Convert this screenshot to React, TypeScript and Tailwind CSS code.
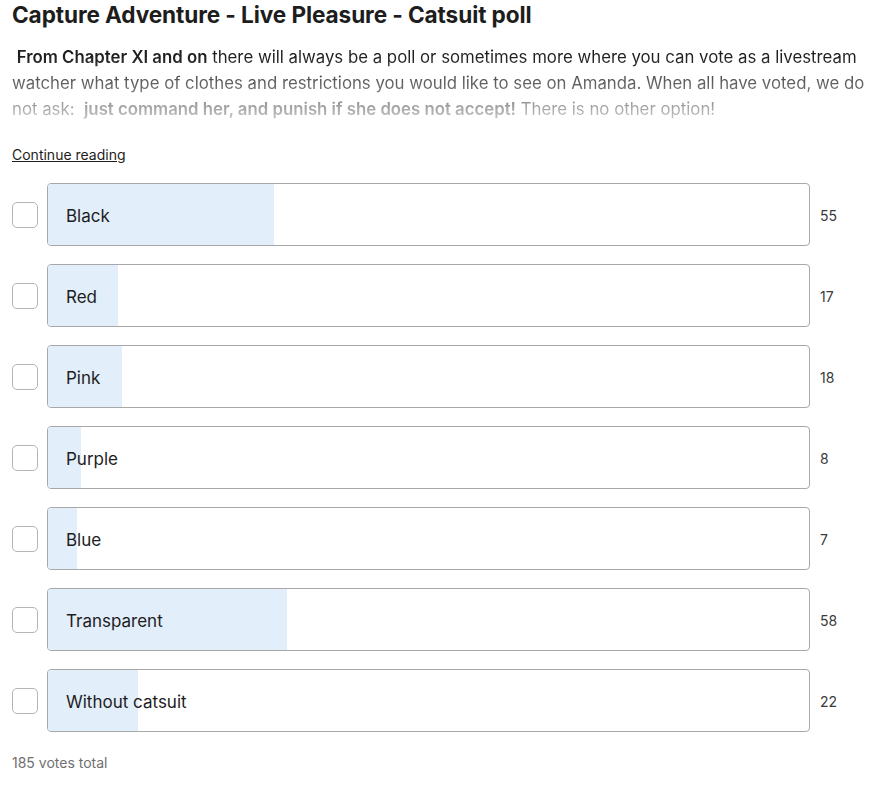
import { useState } from "react";

type Option = { label: string; votes: number };

const options: Option[] = [
  { label: "Black", votes: 55 },
  { label: "Red", votes: 17 },
  { label: "Pink", votes: 18 },
  { label: "Purple", votes: 8 },
  { label: "Blue", votes: 7 },
  { label: "Transparent", votes: 58 },
  { label: "Without catsuit", votes: 22 },
];

const total = 185;

export default function App() {
  const [checked, setChecked] = useState<string[]>([]);

  const toggle = (label: string) =>
    setChecked((prev) =>
      prev.includes(label) ? prev.filter((l) => l !== label) : [...prev, label]
    );

  return (
    <main className="min-h-screen bg-white px-3 pt-[1px] font-['Inter',sans-serif] text-[#1d1d1d]">
      <h1 className="text-[22.6px] font-bold leading-[28px] tracking-[-0.1px]">
        Capture Adventure - Live Pleasure - Catsuit poll
      </h1>

      <p className="mt-[15px] bg-gradient-to-b from-[#1d1d1d] from-[15%] to-[#d0d0d0] to-[100%] bg-clip-text text-[16.8px] leading-[26px] text-transparent">
        &nbsp;<b className="font-semibold">From Chapter XI and on</b> there will always be a poll or
        sometimes more where you can vote as a livestream watcher what type of clothes and
        restrictions you would like to see on Amanda. When all have voted, we do not ask:&nbsp;{" "}
        <b className="font-semibold">just command her, and punish if she does not accept!</b>{" "}
        There is no other option!
      </p>

      <a href="#" className="mt-[23px] inline-block text-[14px] leading-[20px] text-[#1d1d1d] underline">
        Continue reading
      </a>

      <div className="mt-[17px] flex flex-col gap-[18px]">
        {options.map((o) => (
          <PollRow
            key={o.label}
            option={o}
            checked={checked.includes(o.label)}
            onToggle={() => toggle(o.label)}
          />
        ))}
      </div>

      <p className="mt-[21px] text-[14px] leading-[20px] text-[#707070]">
        {total} votes total
      </p>
    </main>
  );
}

function PollRow({
  option,
  checked,
  onToggle,
}: {
  option: Option;
  checked: boolean;
  onToggle: () => void;
}) {
  const pct = (option.votes / total) * 100;
  return (
    <div className="flex items-center">
      <button
        onClick={onToggle}
        className={`h-[26px] w-[26px] shrink-0 rounded-[5px] border border-[#b5b5b5] ${
          checked ? "bg-[#e3eefb]" : "bg-white"
        }`}
      />
      <div className="relative ml-[9px] h-[63px] w-[763px] overflow-hidden rounded-[4px] border border-[#a8a8a8] bg-white">
        <div
          className="absolute inset-y-0 left-0 bg-[#e3eefb]"
          style={{ width: `${pct}%` }}
        />
        <span className="relative flex h-full items-center pl-[18px] pt-[4px] text-[17px] text-[#1d1d1d]">
          {option.label}
        </span>
      </div>
      <span className="ml-[10px] pt-[2px] text-[14px] text-[#3a3a3a]">{option.votes}</span>
    </div>
  );
}
